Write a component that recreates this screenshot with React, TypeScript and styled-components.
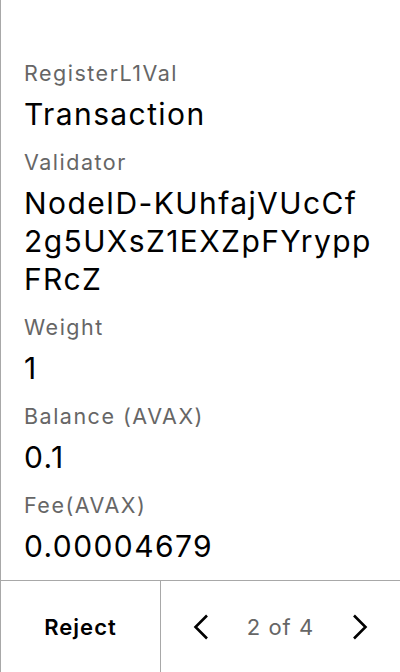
import React from "react";
import styled, { createGlobalStyle } from "styled-components";

const GlobalStyle = createGlobalStyle`
  html, body {
    margin: 0;
    padding: 0;
    background: #fff;
  }
  body {
    font-family: Inter, "Noto Sans", sans-serif;
  }
`;

const Screen = styled.div`
  display: flex;
  flex-direction: column;
  width: 400px;
  height: 672px;
  box-sizing: border-box;
  border-left: 1px solid #a8a8a8;
  background: #fff;
`;

const Content = styled.div`
  flex: 1;
  min-height: 0;
  overflow: hidden;
  display: flex;
  flex-direction: column;
  padding: 59px 16px 0 23px;
`;

const Field = styled.div`
  display: flex;
  flex-direction: column;
  flex-shrink: 0;
  gap: 8px;
  margin-bottom: 15px;
`;

const Label = styled.div`
  font-size: 21.5px;
  line-height: 28px;
  letter-spacing: 1.5px;
  color: #666;
`;

const Value = styled.div`
  font-size: 30px;
  line-height: 38px;
  letter-spacing: 1.4px;
  color: #000;
`;

const Footer = styled.div`
  display: flex;
  flex-shrink: 0;
  height: 92px;
  border-top: 1px solid #a8a8a8;
  box-sizing: border-box;
`;

const RejectButton = styled.button`
  width: 160px;
  border: 0;
  border-right: 1px solid #a8a8a8;
  background: transparent;
  font-family: inherit;
  font-size: 22px;
  font-weight: 600;
  letter-spacing: 1px;
  color: #000;
  padding: 0;
`;

const Pager = styled.div`
  flex: 1;
  display: flex;
  align-items: center;
  justify-content: space-between;
  padding: 0 32px 0 32px;
`;

const PageText = styled.span`
  font-size: 22px;
  letter-spacing: 1px;
  color: #666;
`;

const Chevron = styled.svg`
  width: 16px;
  height: 26px;
  display: block;
`;

const fields: { label: string; lines: string[] }[] = [
  { label: "RegisterL1Val", lines: ["Transaction"] },
  {
    label: "Validator",
    lines: ["NodeID-KUhfajVUcCf", "2g5UXsZ1EXZpFYrypp", "FRcZ"],
  },
  { label: "Weight", lines: ["1"] },
  { label: "Balance (AVAX)", lines: ["0.1"] },
  { label: "Fee(AVAX)", lines: ["0.00004679"] },
];

export default function App() {
  return (
    <>
      <GlobalStyle />
      <Screen>
        <Content>
          {fields.map((f) => (
            <Field key={f.label}>
              <Label>{f.label}</Label>
              <Value>
                {f.lines.map((line, i) => (
                  <div key={i}>{line}</div>
                ))}
              </Value>
            </Field>
          ))}
        </Content>
        <Footer>
          <RejectButton>Reject</RejectButton>
          <Pager>
            <Chevron viewBox="0 0 16 26">
              <path d="M14 1.5 L2.5 13 L14 24.5" fill="none" stroke="#000" strokeWidth="2.6" />
            </Chevron>
            <PageText>2 of 4</PageText>
            <Chevron viewBox="0 0 16 26">
              <path d="M2 1.5 L13.5 13 L2 24.5" fill="none" stroke="#000" strokeWidth="2.6" />
            </Chevron>
          </Pager>
        </Footer>
      </Screen>
    </>
  );
}
